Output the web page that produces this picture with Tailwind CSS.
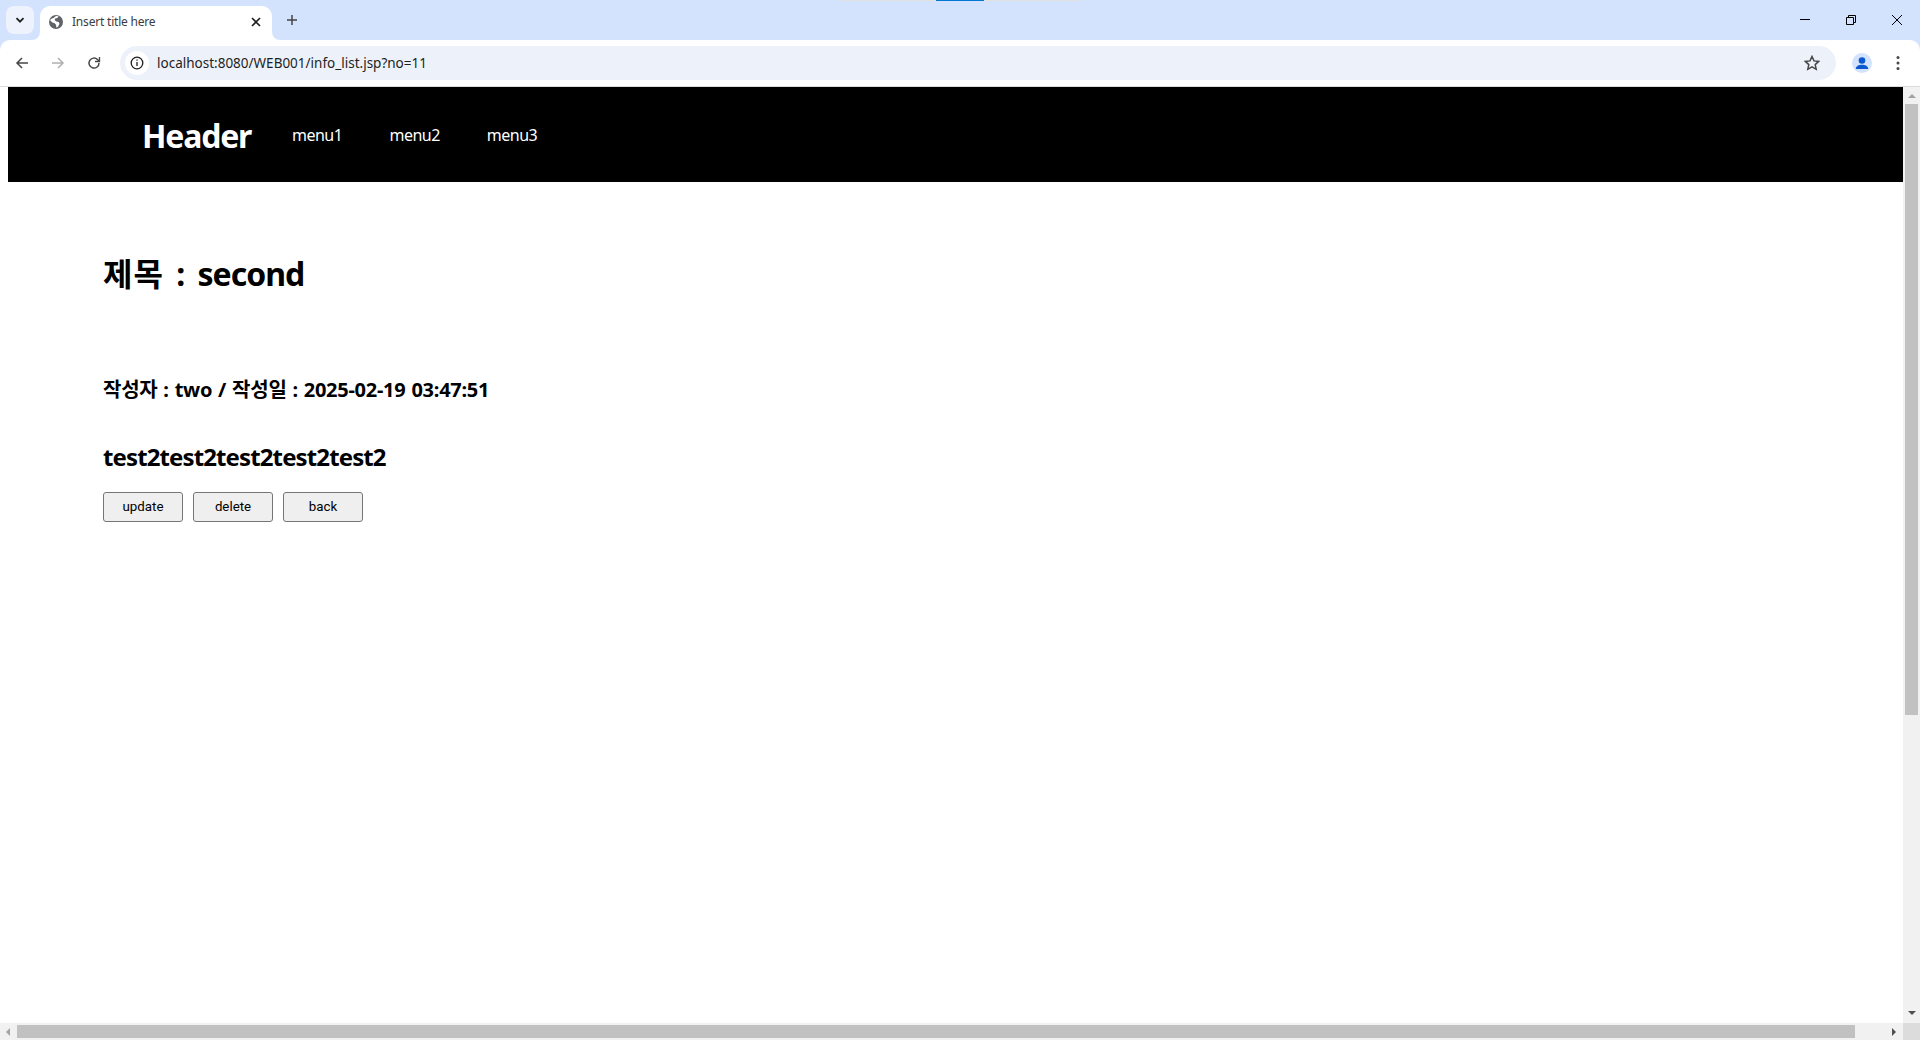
<!DOCTYPE html>
<html lang="ko">
<head>
    <meta charset="UTF-8">
    <title>Insert title here</title>
    <script src="https://cdn.jsdelivr.net/npm/@tailwindcss/browser@4"></script>
</head>
<body class="h-[1040px] w-[1920px] overflow-hidden flex flex-col bg-white font-['Noto_Sans','Noto_Sans_CJK_KR',sans-serif] text-black">
    <!-- tab strip -->
    <div class="relative h-[40px] bg-[#d3e3fd] flex items-end shrink-0">
        <div class="absolute top-0 left-[840px] w-[241px] h-px bg-[#e0e0e0]"></div>
        <div class="absolute top-0 left-[936px] w-[48px] h-px bg-[#0078d4]"></div>
        <button class="self-start mt-[6px] ml-[6px] w-[28px] h-[28px] rounded-lg bg-[#edf2fc] flex items-center justify-center">
            <svg width="12" height="12" viewBox="0 0 12 12" fill="none" stroke="#1f1f1f" stroke-width="1.8"><path d="M2.5 4.2 6 7.7l3.5-3.5"/></svg>
        </button>
        <div class="relative ml-[6px] w-[232px] h-[34px] bg-white rounded-t-[10px] flex items-center pl-[9px] pr-[11px]">
            <svg class="absolute left-[-8px] bottom-0" width="8" height="8" viewBox="0 0 8 8"><path d="M8 0v8H0a8 8 0 0 0 8-8z" fill="#fff"/></svg>
            <svg class="absolute right-[-8px] bottom-0" width="8" height="8" viewBox="0 0 8 8"><path d="M0 0v8h8a8 8 0 0 1-8-8z" fill="#fff"/></svg>
            <svg width="14" height="14" viewBox="0 0 16 16" class="shrink-0 -mt-[3px]"><circle cx="8" cy="8" r="8" fill="#5f6368"/><path d="M2 4.5 5 3.5 8 1l3 .5-1.5 2L7 4 6.5 6 8.500 7.500 11 8l1 2-1.500 3-2 1.500L8 11 6.500 9.500 4 8.500 1.500 6.500z" fill="#fff"/></svg>
            <span class="ml-[9px] -mt-[2px] text-[12px] tracking-[-0.2px] text-[#3c3c3c] leading-none whitespace-nowrap">Insert title here</span>
            <svg class="ml-auto -mt-[2px]" width="10" height="10" viewBox="0 0 10 10" stroke="#1f1f1f" stroke-width="1.600"><path d="M1 1l8 8M9 1 1 9"/></svg>
        </div>
        <svg class="self-start mt-[14px] ml-[14px]" width="12" height="12" viewBox="0 0 12 12" stroke="#444746" stroke-width="1.500"><path d="M6 1v10M1 6h10"/></svg>
        <div class="ml-auto self-start flex items-center">
            <svg class="mr-[34px] mt-[14px]" width="12" height="12" viewBox="0 0 12 12" stroke="#000" stroke-width="1"><path d="M1 5.500h10"/></svg>
            <svg class="mr-[34px] mt-[14px]" width="12" height="12" viewBox="0 0 12 12" fill="none" stroke="#000" stroke-width="1"><path d="M1.500 3.500h7v7h-7zM3.500 3.500v-2h7v7h-2"/></svg>
            <svg class="mr-[17px] mt-[14px]" width="12" height="12" viewBox="0 0 12 12" stroke="#000" stroke-width="1"><path d="M1 1l10 10M11 1 1 11"/></svg>
        </div>
    </div>

    <!-- toolbar -->
    <div class="relative h-[47px] bg-[#d3e3fd] shrink-0">
        <div class="h-[46px] bg-white rounded-t-[10px] flex items-center">
            <svg class="ml-[15px]" width="14" height="14" viewBox="0 0 14 14" fill="none" stroke="#474747" stroke-width="1.500"><path d="M13 7H2M7 2 2 7l5 5"/></svg>
            <svg class="ml-[22px]" width="14" height="14" viewBox="0 0 14 14" fill="none" stroke="#b0b0b0" stroke-width="1.500"><path d="M1 7h11M7 2l5 5-5 5"/></svg>
            <svg class="ml-[22px]" width="14" height="14" viewBox="0 0 14 14" fill="none" stroke="#474747" stroke-width="1.500"><path d="M12 7a5 5 0 1 1-1.500-3.500L12 5"/><path d="M12.500 1v4.500H8" stroke-width="1.300"/></svg>
            <div class="ml-[19px] w-[1716px] h-[34px] rounded-full bg-[#edf2fa] flex items-center pl-[5px]">
                <div class="w-[24px] h-[24px] rounded-full bg-white flex items-center justify-center">
                    <svg width="14" height="14" viewBox="0 0 14 14" fill="none" stroke="#1f1f1f" stroke-width="1.300"><circle cx="7" cy="7" r="5.800"/><path d="M7 6v4M7 3.500v1.300"/></svg>
                </div>
                <span class="ml-[8px] pt-[2px] text-[13.500px] text-[#1f1f1f] leading-none whitespace-nowrap">localhost:8080/WEB001/info_list.jsp?no=11</span>
                <svg class="ml-auto mr-[16px]" width="16" height="16" viewBox="0 0 16 16" fill="none" stroke="#474747" stroke-width="1.500"><path d="M8 1.500l2 4.400 4.700.5-3.500 3.200 1 4.700L8 11.900l-4.200 2.400 1-4.700L1.300 6.400 6 5.900z"/></svg>
            </div>
            <div class="ml-[16px] w-[20px] h-[20px] rounded-full bg-[#d3e3fd] overflow-hidden flex items-center justify-center">
                <svg width="20" height="20" viewBox="0 0 20 20" fill="#0b57d0"><circle cx="10" cy="7.500" r="3.300"/><path d="M3.800 16c0-2.800 3-4.200 6.200-4.200s6.200 1.400 6.200 4.200z"/></svg>
            </div>
            <svg class="ml-[24px]" width="4" height="16" viewBox="0 0 4 16" fill="#474747"><circle cx="2" cy="2.500" r="1.500"/><circle cx="2" cy="8" r="1.500"/><circle cx="2" cy="13.500" r="1.500"/></svg>
        </div>
        <div class="h-px bg-[#dcdcdc]"></div>
    </div>

    <!-- page viewport -->
    <div class="flex flex-1 min-h-0">
        <div class="flex-1 min-w-0 flex flex-col">
            <main class="flex-1 min-h-0 pl-[8px]">
                <header class="h-[95px] bg-black text-white flex items-center pl-[134px] pt-[2px]">
                    <h1 class="w-[150px] text-[32px] font-bold tracking-[-1.200px] leading-none">Header</h1>
                    <nav class="flex gap-[47px] text-[16px] tracking-[-0.500px] -mt-[2px]">
                        <a>menu1</a>
                        <a>menu2</a>
                        <a>menu3</a>
                    </nav>
                </header>
                <section class="pl-[95px] pt-[70px]">
                    <h2 class="text-[32px] font-bold leading-[44px] [word-spacing:4px]"><span class="tracking-[1px]">제목</span> : <span class="tracking-[-1px]">second</span></h2>
                    <p class="mt-[81px] text-[20px] font-bold leading-[26px] tracking-[-0.260px] [word-spacing:1px]">작성자 : two / 작성일 : 2025-02-19 03:47:51</p>
                    <p class="mt-[38px] text-[24px] font-bold leading-[32px] tracking-[-0.880px]">test2test2test2test2test2</p>
                    <div class="mt-[19px] flex gap-[10px]">
                        <button class="w-[80px] h-[30px] border border-[#767676] rounded-[3px] bg-[#efefef] text-[13.300px] font-['Roboto',sans-serif]">update</button>
                        <button class="w-[80px] h-[30px] border border-[#767676] rounded-[3px] bg-[#efefef] text-[13.300px] font-['Roboto',sans-serif]">delete</button>
                        <button class="w-[80px] h-[30px] border border-[#767676] rounded-[3px] bg-[#efefef] text-[13.300px] font-['Roboto',sans-serif]">back</button>
                    </div>
                </section>
            </main>
            <!-- horizontal scrollbar -->
            <div class="h-[17px] bg-[#f1f1f1] flex items-center shrink-0">
                <svg class="ml-[6px]" width="5" height="8" viewBox="0 0 5 8" fill="#a3a3a3"><path d="M4 0v8L0 4z"/></svg>
                <div class="ml-[6px] w-[1838px] h-[13px] bg-[#c1c1c1]"></div>
                <svg class="ml-auto mr-[6px]" width="5" height="8" viewBox="0 0 5 8" fill="#505050"><path d="M0 0v8l4-4z"/></svg>
            </div>
        </div>
        <!-- vertical scrollbar -->
        <div class="w-[17px] bg-[#f1f1f1] flex flex-col items-center shrink-0">
            <svg class="mt-[7px]" width="8" height="5" viewBox="0 0 8 5" fill="#a3a3a3"><path d="M0 4h8L4 0z"/></svg>
            <div class="mt-[5px] w-[13px] h-[611px] bg-[#c1c1c1]"></div>
            <svg class="mt-auto mb-[7px]" width="8" height="5" viewBox="0 0 8 5" fill="#505050"><path d="M0 0h8L4 4z"/></svg>
            <div class="w-[17px] h-[17px] bg-[#dcdcdc]"></div>
        </div>
    </div>
</body>
</html>
